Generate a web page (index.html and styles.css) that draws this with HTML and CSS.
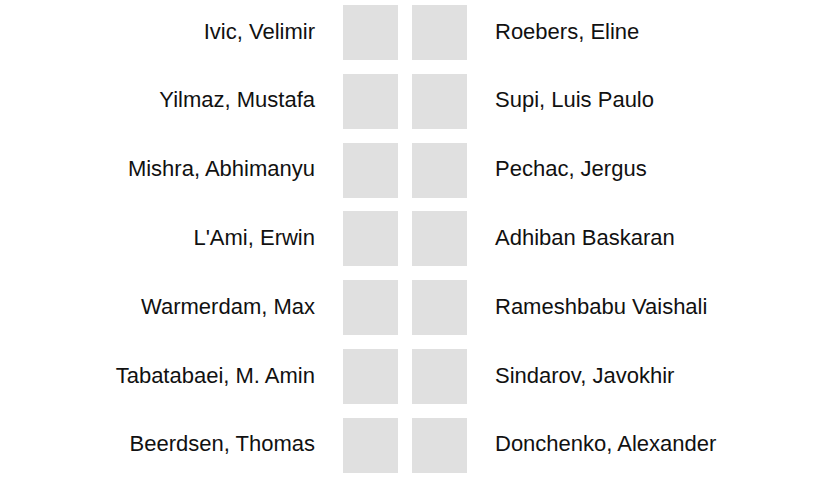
FILE: index.html
```html
<!DOCTYPE html>
<html>
<head>
<meta charset="utf-8">
<link rel="stylesheet" href="styles.css">
</head>
<body>
<div class="pairings">
  <div class="row"><div class="name left">Ivic, Velimir</div><div class="box"></div><div class="box"></div><div class="name right">Roebers, Eline</div></div>
  <div class="row"><div class="name left">Yilmaz, Mustafa</div><div class="box"></div><div class="box"></div><div class="name right">Supi, Luis Paulo</div></div>
  <div class="row"><div class="name left">Mishra, Abhimanyu</div><div class="box"></div><div class="box"></div><div class="name right">Pechac, Jergus</div></div>
  <div class="row"><div class="name left">L'Ami, Erwin</div><div class="box"></div><div class="box"></div><div class="name right">Adhiban Baskaran</div></div>
  <div class="row"><div class="name left">Warmerdam, Max</div><div class="box"></div><div class="box"></div><div class="name right">Rameshbabu Vaishali</div></div>
  <div class="row"><div class="name left">Tabatabaei, M. Amin</div><div class="box"></div><div class="box"></div><div class="name right">Sindarov, Javokhir</div></div>
  <div class="row"><div class="name left">Beerdsen, Thomas</div><div class="box"></div><div class="box"></div><div class="name right">Donchenko, Alexander</div></div>
</div>
</body>
</html>
```
FILE: styles.css
```css
html, body {
  margin: 0;
  padding: 0;
  background: #ffffff;
}
body {
  font-family: "Liberation Sans", Arial, sans-serif;
  font-size: 22px;
  color: #111111;
}
.pairings {
  display: flex;
  flex-direction: column;
  gap: 13.83px;
  padding-top: 5px;
}
.row {
  display: flex;
  align-items: center;
  height: 55px;
}
.name {
  white-space: nowrap;
  padding-bottom: 2px;
}
.name.left {
  width: 315px;
  text-align: right;
  margin-right: 28px;
}
.name.right {
  margin-left: 28px;
}
.box {
  width: 55px;
  height: 55px;
  background: #e0e0e0;
}
.box + .box {
  margin-left: 14px;
}
```
